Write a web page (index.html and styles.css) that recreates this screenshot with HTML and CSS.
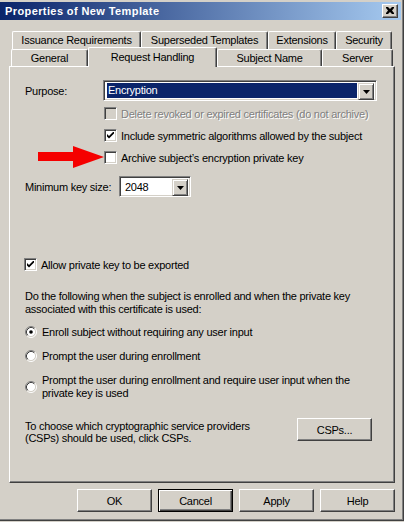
FILE: index.html
```html
<!DOCTYPE html>
<html>
<head>
<meta charset="utf-8">
<link rel="stylesheet" href="styles.css">
</head>
<body>
<div class="window">
  <div class="titlebar">
    <span class="title">Properties of New Template</span>
    <div class="close">
      <svg width="8" height="7" viewBox="0 0 8 7"><path d="M0 0h2l2 2 2-2h2v1l-2 2.5 2 2.5v1h-2l-2-2-2 2h-2v-1l2-2.5-2-2.5z" fill="#000"/></svg>
    </div>
  </div>
  <div class="tabs">
    <div class="tabrow row1">
      <div class="tab w-iss">Issuance Requirements</div>
      <div class="tab w-sup">Superseded Templates</div>
      <div class="tab w-ext">Extensions</div>
      <div class="tab w-sec">Security</div>
    </div>
    <div class="tabrow row2">
      <div class="tab w-gen">General</div>
      <div class="tab w-req selected">Request Handling</div>
      <div class="tab w-sub">Subject Name</div>
      <div class="tab w-srv">Server</div>
    </div>
  </div>
  <div class="panel">
    <svg class="annot-arrow" width="67" height="22" viewBox="0 0 67 22"><rect x="0" y="6" width="36" height="9" fill="#f50000"/><polygon points="35,0 66,11 35,22" fill="#f50000"/></svg>

    <div class="row purpose">
      <span class="label lab-purpose">Purpose:</span>
      <div class="combo combo-wide">
        <div class="combo-field"><span class="combo-sel">Encryption</span></div>
        <div class="combo-btn"><svg width="7" height="4" viewBox="0 0 7 4"><path d="M0 0h7L3.5 4z" fill="#000"/></svg></div>
      </div>
    </div>

    <div class="checks">
      <div class="check-row cr1">
        <span class="cb disabled"></span>
        <span class="disabled-text">Delete revoked or expired certificates (do not archive)</span>
      </div>
      <div class="check-row cr2">
        <span class="cb"><svg width="7" height="7" viewBox="0 0 7 7"><path d="M0 2l2 2 5-5v2.4L2 6.4 0 4.4z" fill="#000"/></svg></span>
        <span>Include symmetric algorithms allowed by the subject</span>
      </div>
      <div class="check-row cr3">
        <span class="cb"></span>
        <span>Archive subject’s encryption private key</span>
      </div>
    </div>

    <div class="row keysize">
      <span class="label lab-key">Minimum key size:</span>
      <div class="combo combo-small">
        <div class="combo-field"><span class="combo-val">2048</span></div>
        <div class="combo-btn"><svg width="7" height="4" viewBox="0 0 7 4"><path d="M0 0h7L3.5 4z" fill="#000"/></svg></div>
      </div>
    </div>

    <div class="check-row allow">
      <span class="cb"><svg width="7" height="7" viewBox="0 0 7 7"><path d="M0 2l2 2 5-5v2.4L2 6.4 0 4.4z" fill="#000"/></svg></span>
      <span>Allow private key to be exported</span>
    </div>

    <p class="para">Do the following when the subject is enrolled and when the private key associated with this certificate is used:</p>

    <div class="radio-row rr1">
      <svg class="radio" width="12" height="12" viewBox="0 0 12 12">
        <circle cx="6" cy="6" r="4.5" fill="#fff"/>
        <path d="M2.11 9.89A5.5 5.5 0 0 1 9.89 2.11" stroke="#808080" fill="none"/>
        <path d="M9.89 2.11A5.5 5.5 0 0 1 2.11 9.89" stroke="#fff" fill="none"/>
        <path d="M2.82 9.18A4.5 4.5 0 0 1 9.18 2.82" stroke="#404040" fill="none"/>
        <path d="M9.18 2.82A4.5 4.5 0 0 1 2.82 9.18" stroke="#d4d0c8" fill="none"/>
        <circle cx="6" cy="6" r="1.8" fill="#000"/>
      </svg>
      <span>Enroll subject without requiring any user input</span>
    </div>
    <div class="radio-row rr2">
      <svg class="radio" width="12" height="12" viewBox="0 0 12 12">
        <circle cx="6" cy="6" r="4.5" fill="#fff"/>
        <path d="M2.11 9.89A5.5 5.5 0 0 1 9.89 2.11" stroke="#808080" fill="none"/>
        <path d="M9.89 2.11A5.5 5.5 0 0 1 2.11 9.89" stroke="#fff" fill="none"/>
        <path d="M2.82 9.18A4.5 4.5 0 0 1 9.18 2.82" stroke="#404040" fill="none"/>
        <path d="M9.18 2.82A4.5 4.5 0 0 1 2.82 9.18" stroke="#d4d0c8" fill="none"/>
      </svg>
      <span>Prompt the user during enrollment</span>
    </div>
    <div class="radio-row rr3">
      <svg class="radio" width="12" height="12" viewBox="0 0 12 12">
        <circle cx="6" cy="6" r="4.5" fill="#fff"/>
        <path d="M2.11 9.89A5.5 5.5 0 0 1 9.89 2.11" stroke="#808080" fill="none"/>
        <path d="M9.89 2.11A5.5 5.5 0 0 1 2.11 9.89" stroke="#fff" fill="none"/>
        <path d="M2.82 9.18A4.5 4.5 0 0 1 9.18 2.82" stroke="#404040" fill="none"/>
        <path d="M9.18 2.82A4.5 4.5 0 0 1 2.82 9.18" stroke="#d4d0c8" fill="none"/>
      </svg>
      <span class="two-line">Prompt the user during enrollment and require user input when the private key is used</span>
    </div>

    <div class="csp-row">
      <span class="csp-text">To choose which cryptographic service providers (CSPs) should be used, click CSPs.</span>
      <div class="btn csp-btn">CSPs...</div>
    </div>
  </div>
  <div class="buttons">
    <div class="btn">OK</div>
    <div class="btn default"><span>Cancel</span></div>
    <div class="btn">Apply</div>
    <div class="btn">Help</div>
  </div>
</div>
</body>
</html>
```

FILE: styles.css
```css
html, body {
  margin: 0;
  padding: 0;
  background: #d4d0c8;
}
body {
  font-family: "Liberation Sans", Arial, sans-serif;
  font-size: 11px;
  letter-spacing: -0.25px;
  color: #000;
}
.window {
  box-sizing: border-box;
  width: 404px;
  height: 521px;
  padding: 2px 3px 0 0;
  background: #d4d0c8;
  border-right: 1px solid #404040;
  border-bottom: 1px solid #404040;
  box-shadow: inset -1px -1px 0 #808080;
  display: flex;
  flex-direction: column;
}
.titlebar {
  height: 18px;
  width: 401px;
  background: linear-gradient(to right, #0a246a, #a6caf0);
  display: flex;
  align-items: center;
  justify-content: space-between;
  box-sizing: border-box;
  padding: 0 3px 0 5px;
}
.title {
  color: #fff;
  font-weight: bold;
  font-size: 11px;
  letter-spacing: 0.4px;
}
.close {
  box-sizing: border-box;
  width: 16px;
  height: 14px;
  background: #d4d0c8;
  border-top: 1px solid #fff;
  border-left: 1px solid #fff;
  border-right: 1px solid #404040;
  border-bottom: 1px solid #404040;
  box-shadow: inset -1px -1px 0 #808080;
  display: flex;
  align-items: center;
  justify-content: center;
  padding: 0 1px 1px 0;
}
.close svg { display: block; }

/* tabs */
.tabs {
  margin-top: 11px;
  margin-left: 11px;
  display: flex;
  flex-direction: column;
  position: relative;
  z-index: 2;
}
.tabrow {
  display: flex;
}
.row1 {
  padding-left: 1px;
  height: 18px;
}
.row2 {
  height: 17px;
}
.tab {
  box-sizing: border-box;
  height: 18px;
  border-top: 1px solid #fff;
  border-left: 1px solid #fff;
  border-right: 1px solid #404040;
  box-shadow: inset -1px 0 0 #808080;
  border-radius: 2px 2px 0 0;
  text-align: center;
  line-height: 16px;
  white-space: nowrap;
  background: #d4d0c8;
}
.row2 .tab {
  height: 17px;
  line-height: 17px;
}
.row2 .tab.selected {
  height: 20px;
  margin-top: -2px;
  line-height: 18px;
  position: relative;
  z-index: 3;
}
.w-iss { width: 129px; }
.w-sup { width: 127px; }
.w-ext { width: 68px; }
.w-sec { width: 56px; }
.w-gen { width: 77px; }
.w-req { width: 129px; }
.w-sub { width: 105px; }
.w-srv { width: 71px; }

/* panel */
.panel {
  position: relative;
  box-sizing: border-box;
  margin-left: 9px;
  width: 386px;
  height: 417px;
  border-top: 1px solid #fff;
  border-left: 1px solid #fff;
  border-right: 1px solid #404040;
  border-bottom: 1px solid #404040;
  box-shadow: inset -1px -1px 0 #808080;
  display: flex;
  flex-direction: column;
  z-index: 1;
}
.annot-arrow {
  position: absolute;
  left: 28px;
  top: 79px;
}
.row {
  display: flex;
  align-items: center;
  height: 21px;
  padding-left: 15px;
}
.purpose { margin-top: 13px; }
.lab-purpose { width: 78px; }
.keysize { margin-top: 12px; }
.lab-key { width: 94px; }

.combo {
  box-sizing: border-box;
  height: 21px;
  background: #fff;
  border-top: 1px solid #808080;
  border-left: 1px solid #808080;
  border-right: 1px solid #fff;
  border-bottom: 1px solid #fff;
  box-shadow: inset 1px 1px 0 #404040, inset -1px -1px 0 #d4d0c8;
  display: flex;
  padding: 2px 2px 2px 2px;
}
.combo-wide { width: 274px; }
.combo-small { width: 72px; }
.combo-field {
  flex: 1;
  display: flex;
  align-items: center;
  padding: 1px;
}
.combo-sel {
  display: block;
  width: 100%;
  height: 15px;
  line-height: 15px;
  background: #0a246a;
  color: #fff;
  padding-left: 1px;
}
.combo-val {
  padding-left: 2px;
}
.combo-btn {
  box-sizing: border-box;
  width: 16px;
  height: 17px;
  background: #d4d0c8;
  border-top: 1px solid #d4d0c8;
  border-left: 1px solid #d4d0c8;
  border-right: 1px solid #404040;
  border-bottom: 1px solid #404040;
  box-shadow: inset 1px 1px 0 #fff, inset -1px -1px 0 #808080;
  display: flex;
  align-items: center;
  justify-content: center;
}
.combo-btn svg { display: block; }

.checks {
  display: flex;
  flex-direction: column;
  padding-left: 94px;
}
.check-row {
  display: flex;
  align-items: center;
  height: 13px;
  gap: 4px;
  white-space: nowrap;
}
.cr1 { margin-top: 6px; }
.cr2 { margin-top: 9px; }
.cr3 { margin-top: 9px; }
.cb {
  box-sizing: border-box;
  flex: none;
  width: 13px;
  height: 13px;
  background: #fff;
  border-top: 1px solid #808080;
  border-left: 1px solid #808080;
  border-right: 1px solid #fff;
  border-bottom: 1px solid #fff;
  box-shadow: inset 1px 1px 0 #404040, inset -1px -1px 0 #d4d0c8;
  display: flex;
  align-items: center;
  justify-content: center;
}
.cb svg { display: block; }
.cb.disabled { background: #d4d0c8; }
.disabled-text {
  color: #808080;
  text-shadow: 1px 1px 0 #fff;
}
.allow {
  margin-top: 61px;
  padding-left: 14px;
}

.para {
  margin: 19px 0 0 15px;
  width: 350px;
  line-height: 13px;
}

.radio-row {
  display: flex;
  align-items: center;
  gap: 5px;
  padding-left: 15px;
  min-height: 13px;
}
.radio { display: block; flex: none; }
.rr1 { margin-top: 9px; }
.rr2 { margin-top: 11px; }
.rr3 { margin-top: 12px; }
.two-line {
  width: 320px;
  line-height: 13px;
}

.csp-row {
  margin-top: 18px;
  display: flex;
  align-items: flex-start;
  justify-content: space-between;
  padding: 0 22px 0 15px;
}
.csp-text {
  width: 250px;
  line-height: 12px;
  padding-top: 2px;
}

.btn {
  box-sizing: border-box;
  width: 75px;
  height: 23px;
  background: #d4d0c8;
  border-top: 1px solid #fff;
  border-left: 1px solid #fff;
  border-right: 1px solid #404040;
  border-bottom: 1px solid #404040;
  box-shadow: inset -1px -1px 0 #808080;
  display: flex;
  align-items: center;
  justify-content: center;
}
.btn.default {
  border: 1px solid #000;
  box-shadow: inset 1px 1px 0 #fff, inset -1px -1px 0 #404040, inset -2px -2px 0 #808080;
}
.buttons {
  display: flex;
  gap: 6px;
  margin-top: 6px;
  margin-left: 77px;
}
```
